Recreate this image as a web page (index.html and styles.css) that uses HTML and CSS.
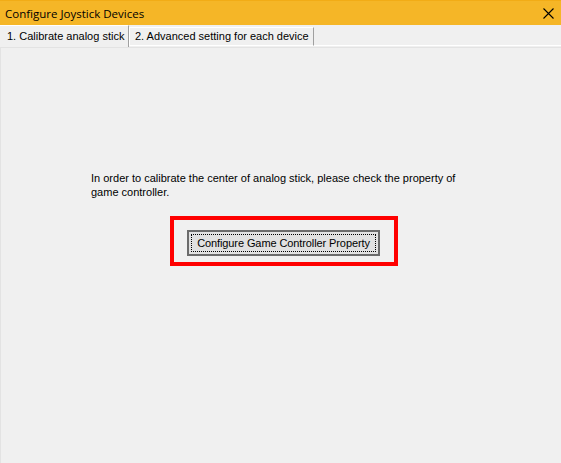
FILE: index.html
```html
<!DOCTYPE html>
<html>
  <head>
    <title>Configure Joystick Devices</title>
    <link rel="stylesheet" href="styles.css">
  </head>
  <body>
    <div class="window">
      <div class="titlebar">
        <span class="title">Configure Joystick Devices</span>
        <span class="close">
          <svg width="11" height="11" viewBox="0 0 11 11">
            <path d="M0.5 0.5 L10.5 10.5 M10.5 0.5 L0.5 10.5" stroke="#000" stroke-width="1.1" fill="none" />
          </svg>
        </span>
      </div>
      <div class="tabs">
        <div class="tab active">1. Calibrate analog stick</div>
        <div class="tab">2. Advanced setting for each device</div>
        <div class="tab-rest"></div>
      </div>
      <div class="page">
        <p class="info">
          In order to calibrate the center of analog stick, please check the property of<br />
          game controller.
        </p>
        <div class="highlight">
          <button class="btn"><span class="focus">Configure Game Controller Property</span></button>
        </div>
      </div>
    </div>
  </body>
</html>
```

FILE: styles.css
```css
html,
body {
  margin: 0;
  padding: 0;
  background-color: #f0f0f0;
}
.window {
  width: 561px;
  height: 463px;
  display: flex;
  flex-direction: column;
  font-family: "Liberation Sans", Arial, sans-serif;
  font-size: 11px;
  color: #000;
}
.titlebar {
  height: 25px;
  flex: none;
  box-sizing: border-box;
  border-top: 1px solid #f2ac16;
  background-color: #f5b627;
  display: flex;
  align-items: center;
  justify-content: space-between;
  padding: 0 7px 0 5px;
}
.title {
  font-family: "Open Sans", "Noto Sans", sans-serif;
  font-size: 11.5px;
  color: #000;
}
.close {
  display: flex;
  align-items: center;
}
.tabs {
  display: flex;
  align-items: flex-end;
  height: 22px;
  flex: none;
}
.tab {
  box-sizing: border-box;
  height: 19px;
  padding: 2px 4px 0 5px;
  border-left: 1px solid #fff;
  border-right: 1px solid #a0a0a0;
  border-top: 1px solid #fff;
  border-bottom: 1px solid #fff;
  margin-bottom: 1px;
  white-space: nowrap;
}
.tab.active {
  width: 129px;
  height: 22px;
  padding: 4px 5px 0 7px;
  border-left: none;
  border-bottom: none;
  margin-bottom: 0;
}
.tab-rest {
  flex: 1;
  border-bottom: 1px solid #fff;
  margin-bottom: 1px;
}
.page {
  flex: 1;
  border-left: 1px solid #e3e3e3;
  border-top: 1px solid #e3e3e3;
  padding-top: 123px;
}
.info {
  margin: 0 0 0 90px;
  line-height: 14px;
}
.highlight {
  box-sizing: border-box;
  width: 228px;
  height: 50px;
  margin: 17px 0 0 169px;
  padding: 10px 0 0 13px;
  border: 4px solid #ff0000;
}
.btn {
  display: block;
  width: 193px;
  height: 26px;
  margin: 0;
  padding: 2px;
  border: 2px solid #6b6b6b;
  background-color: #e1e1e1;
  font-family: inherit;
  font-size: 11px;
  letter-spacing: -0.1px;
  color: #000;
  box-sizing: border-box;
}
.focus {
  display: block;
  height: 100%;
  box-sizing: border-box;
  border: 1px dotted #000;
  line-height: 16px;
}
```
